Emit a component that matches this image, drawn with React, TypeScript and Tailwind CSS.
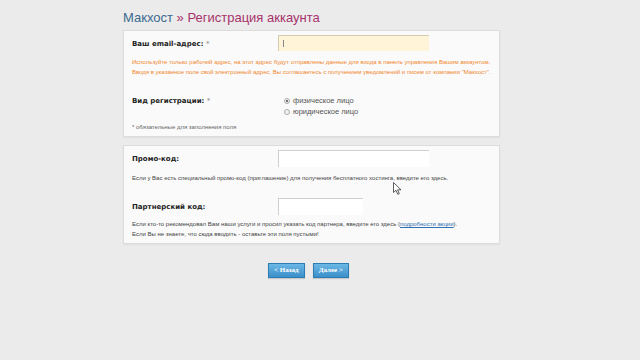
import React from "react";

const label = "font-['DejaVu_Sans',sans-serif] font-bold text-[7px] text-[#222]";
const small = "font-['Liberation_Sans',Arial,sans-serif] text-[6px] leading-[11px]";

function Radio({ checked, text }: { checked?: boolean; text: string }) {
  return (
    <div className="flex items-center gap-[3px] h-[11px]">
      <span className="w-[6px] h-[6px] rounded-full border border-[#aaa] bg-[#f2f2f2] flex items-center justify-center">
        {checked && <span className="w-[2px] h-[2px] rounded-full bg-[#444]" />}
      </span>
      <span className="font-['Liberation_Sans',Arial,sans-serif] text-[7.5px] text-[#555]">{text}</span>
    </div>
  );
}

function Button({ children }: { children: React.ReactNode }) {
  return (
    <button className="h-[15px] px-[5px] border border-[#2e7db3] bg-gradient-to-b from-[#6bb8e6] to-[#3b8fc9] text-white font-['Liberation_Serif',serif] font-bold text-[7px] leading-none shadow-[0_1px_1px_rgba(0,0,0,0.15)]">
      {children}
    </button>
  );
}

export default function App() {
  return (
    <div className="relative w-[640px] h-[360px] bg-[#ebebeb] overflow-hidden">
      <div className="pl-[123px] w-[500px]">
        {/* Title */}
        <h1 className="h-[30px] pt-[9px] font-['Liberation_Sans',Arial,sans-serif] text-[13px] leading-[17px]">
          <span className="text-[#3c6a8e]">Макхост</span>
          <span className="text-[#a8326c]"> » Регистрация аккаунта</span>
        </h1>

        {/* Panel 1 */}
        <div className="h-[107px] border border-[#dcdcdc] bg-[#fafafa] pl-[8px] pt-[4px] shadow-[0_1px_2px_rgba(0,0,0,0.05)]">
          <div className="flex h-[17px]">
            <div className={`${label} w-[146px] pt-[4px]`}>
              Ваш email-адрес: <span className="font-normal text-[#888]">*</span>
            </div>
            <div className="w-[151px] h-[16px] bg-[#fff3d8] border-t border-l border-[#d4cbb5] flex items-center pl-[4px]">
              <span className="w-px h-[7px] bg-[#888]" />
            </div>
          </div>
          <div className={`${small} text-[#f0872e] mt-[5px]`}>
            <p>Используйте только рабочий адрес, на этот адрес будут отправлены данные для входа в панель управления Вашим аккаунтом.</p>
            <p className="-mt-px">Вводя в указанное поле свой электронный адрес, Вы соглашаетесь с получением уведомлений и писем от компании "Макхост".</p>
          </div>
          <div className="flex mt-[17px]">
            <div className={`${label} w-[152px] pt-[1px]`}>
              Вид регистрации: <span className="font-normal text-[#888]">*</span>
            </div>
            <div>
              <Radio checked text="физическое лицо" />
              <Radio text="юридическое лицо" />
            </div>
          </div>
          <p className={`${small} text-[#666] mt-[5px]`}>* обязательные для заполнения поля</p>
        </div>

        {/* Panel 2 */}
        <div className="mt-[8px] h-[99px] border border-[#dcdcdc] bg-[#fafafa] pl-[8px] pt-[4px] shadow-[0_1px_2px_rgba(0,0,0,0.05)]">
          <div className="flex h-[17px]">
            <div className={`${label} w-[146px] pt-[4px]`}>Промо-код:</div>
            <div className="w-[151px] h-[17px] bg-white border-t border-l border-[#cfcfcf]" />
          </div>
          <p className={`${small} text-[#444] mt-[6px]`}>
            Если у Вас есть специальный промо-код (приглашение) для получения бесплатного хостинга, введите его здесь.
          </p>
          <div className="flex h-[17px] mt-[14px]">
            <div className={`${label} w-[146px] pt-[4px]`}>Партнерский код:</div>
            <div className="w-[85px] h-[17px] bg-white border-t border-l border-[#cfcfcf]" />
          </div>
          <div className={`${small} text-[#444] mt-[4px]`}>
            <p>
              Если кто-то рекомендовал Вам наши услуги и просил указать код партнера, введите его здесь (
              <span className="text-[#2f6fb0] underline">подробности акции</span>).
            </p>
            <p className="-mt-px">Если Вы не знаете, что сюда вводить - оставьте эти поля пустыми!</p>
          </div>
        </div>

        {/* Buttons */}
        <div className="flex justify-center gap-[8px] mt-[19px] pr-[6px]">
          <Button>&lt; Назад</Button>
          <Button>Далее &gt;</Button>
        </div>
      </div>

      {/* mouse pointer */}
      <svg className="absolute left-[393px] top-[182px]" width="9" height="13" viewBox="0 0 9 13">
        <path d="M0.5 0.5 L0.5 10.5 L3 8.3 L4.8 12.3 L6.3 11.6 L4.6 7.8 L8 7.8 Z" fill="#fff" stroke="#333" strokeWidth="0.8" strokeLinejoin="round" />
      </svg>
    </div>
  );
}
